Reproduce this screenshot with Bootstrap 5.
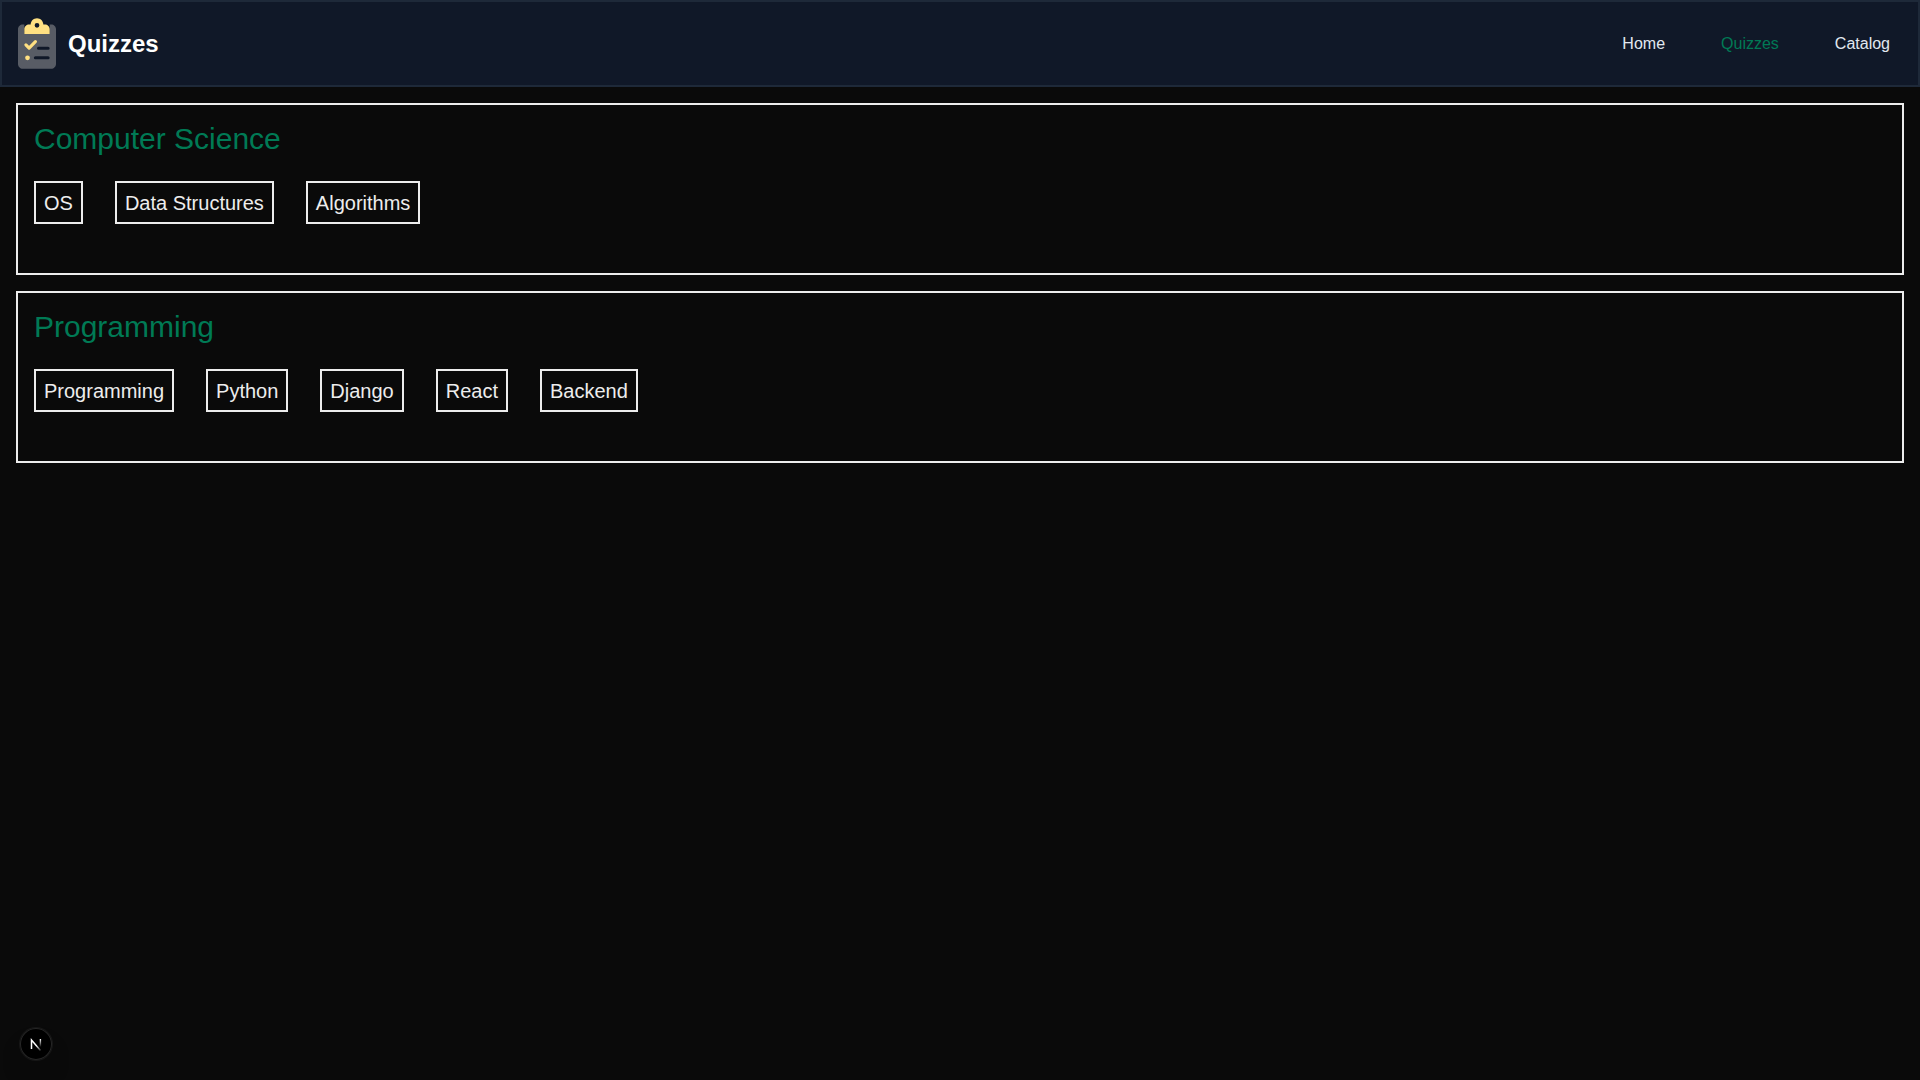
<!DOCTYPE html>
<html lang="en">
<head>
<meta charset="utf-8">
<meta name="viewport" content="width=device-width, initial-scale=1">
<title>Quizzes</title>
<link href="https://cdn.jsdelivr.net/npm/bootstrap@5.3.0/dist/css/bootstrap.min.css" rel="stylesheet">
<style>
  body { background: #0a0a0a; color: #ededed; font-family: "Liberation Sans", Arial, sans-serif; }
  .site-header { background: #101828; border: 2px solid #1e2939; }
  .brand { gap: 12px; font-size: 24px; line-height: 32px; color: #fff; }
  .brand svg { width: 38px; height: 51px; }
  .site-nav { gap: 56px; padding-right: 12px; }
  .site-nav .nav-link { padding: 0; font-size: 16px; line-height: 24px; color: #e2e8f0; }
  .site-nav .nav-link.active { color: #007a55; }
  .topic { border: 2px solid #ededed; padding: 16px 16px 49px; }
  .topic-title { font-size: 30px; line-height: 36px; color: #007a55; }
  .topic-list { gap: 32px; }
  .topic-link { border: 2px solid #ededed; padding: 9px 8px 7px; font-size: 20px; line-height: 23px; color: #ededed; }
  .dev-badge { left: 20px; bottom: 20px; width: 32px; height: 32px; background: #000; box-shadow: 0 0 0 1px #171717, inset 0 0 0 1px #262626, 0 16px 32px -8px rgba(0,0,0,.24); }
</style>
<script defer src="https://cdn.jsdelivr.net/npm/bootstrap@5.3.0/dist/js/bootstrap.bundle.min.js"></script>
</head>
<body>
<header class="site-header d-flex flex-wrap align-items-center justify-content-between p-3">
  <a href="#" class="brand d-flex align-items-center fw-bold text-decoration-none">
    <svg viewBox="0 0 384 512" aria-hidden="true">
      <path fill="#585c65" fill-rule="evenodd" d="M48 64h16v96h256V64h16c26.500 0 48 21.500 48 48v352c0 26.500-21.500 48-48 48H48c-26.500 0-48-21.500-48-48V112c0-26.500 21.500-48 48-48zM208 288a16 16 0 0 0 0 32h96a16 16 0 0 0 0-32zM176 384a16 16 0 0 0 0 32h128a16 16 0 0 0 0-32z"/>
      <path fill="#ffe082" fill-rule="evenodd" d="M192 0c-35 0-64 29-64 64h-16c-26.500 0-48 21.500-48 48v48h256v-48c0-26.500-21.500-48-48-48h-16c0-35-29-64-64-64zM192 48a24 24 0 1 1 0 48 24 24 0 1 1 0-48z"/>
      <circle cx="96" cy="400" r="24" fill="#ffe082"/>
      <path d="M80 270l32 32 64-64" fill="none" stroke="#ffe082" stroke-width="32" stroke-linecap="round" stroke-linejoin="round"/>
    </svg>
    <span>Quizzes</span>
  </a>
  <nav class="site-nav nav" aria-label="Main">
    <a class="nav-link" href="#">Home</a>
    <a class="nav-link active" aria-current="page" href="#">Quizzes</a>
    <a class="nav-link" href="#">Catalog</a>
  </nav>
</header>
<main class="d-flex flex-column gap-3 p-3">
  <section class="topic">
    <h2 class="topic-title fw-normal mb-4">Computer Science</h2>
    <ul class="topic-list list-unstyled d-flex flex-wrap mb-0">
      <li class="d-flex"><a class="topic-link text-decoration-none" href="#">OS</a></li>
      <li class="d-flex"><a class="topic-link text-decoration-none" href="#">Data Structures</a></li>
      <li class="d-flex"><a class="topic-link text-decoration-none" href="#">Algorithms</a></li>
    </ul>
  </section>
  <section class="topic">
    <h2 class="topic-title fw-normal mb-4">Programming</h2>
    <ul class="topic-list list-unstyled d-flex flex-wrap mb-0">
      <li class="d-flex"><a class="topic-link text-decoration-none" href="#">Programming</a></li>
      <li class="d-flex"><a class="topic-link text-decoration-none" href="#">Python</a></li>
      <li class="d-flex"><a class="topic-link text-decoration-none" href="#">Django</a></li>
      <li class="d-flex"><a class="topic-link text-decoration-none" href="#">React</a></li>
      <li class="d-flex"><a class="topic-link text-decoration-none" href="#">Backend</a></li>
    </ul>
  </section>
</main>
<button type="button" class="dev-badge position-fixed rounded-circle border-0 p-0 d-flex align-items-center justify-content-center" aria-label="Open Next.js Dev Tools">
  <svg width="14" height="14" viewBox="0 0 14 14" fill="none" aria-hidden="true">
    <defs>
      <linearGradient id="diag" x1="8" y1="8" x2="12" y2="13" gradientUnits="userSpaceOnUse"><stop stop-color="#fff"/><stop offset="1" stop-color="#fff" stop-opacity=".2"/></linearGradient>
      <linearGradient id="stem" x1="0" y1="2" x2="0" y2="10" gradientUnits="userSpaceOnUse"><stop stop-color="#fff"/><stop offset="1" stop-color="#fff" stop-opacity="0"/></linearGradient>
    </defs>
    <path d="M2.500 12V3L11.500 13.500" stroke="url(#diag)" stroke-width="1.500"/>
    <path d="M11.400 2v8" stroke="url(#stem)" stroke-width="1.400"/>
  </svg>
</button>
</body>
</html>
